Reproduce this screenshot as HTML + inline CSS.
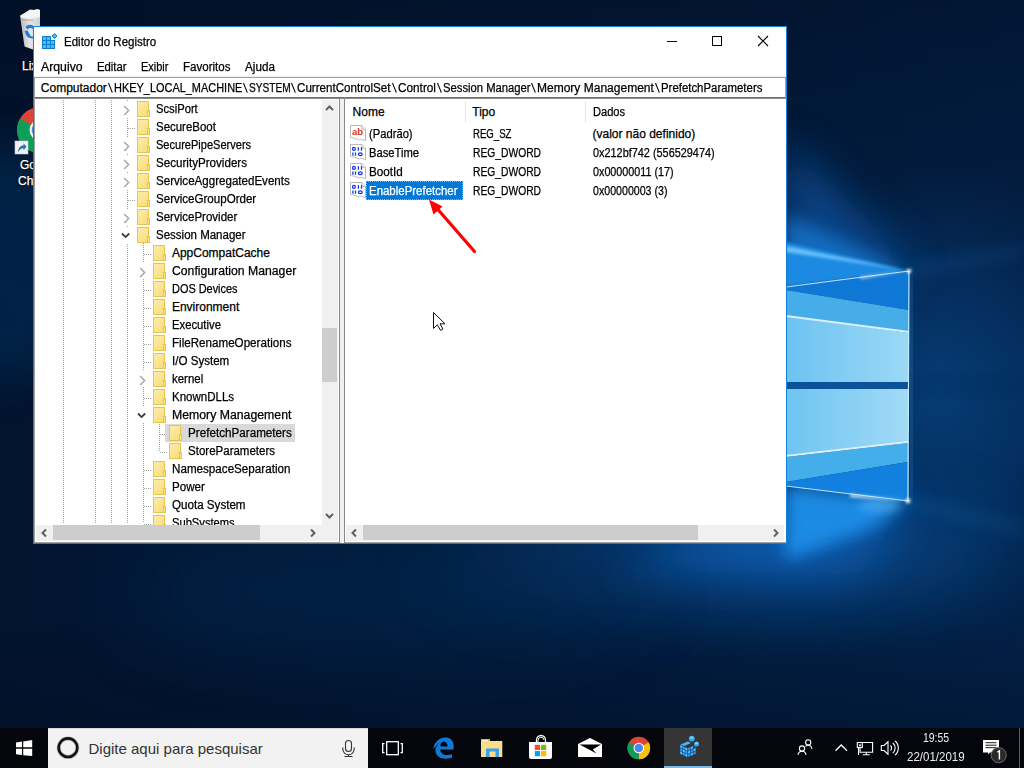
<!DOCTYPE html>
<html><head><meta charset="utf-8"><style>
*{margin:0;padding:0;box-sizing:border-box}
html,body{width:1024px;height:768px;overflow:hidden;background:#031330}
body{position:relative;font-family:"Liberation Sans",sans-serif;font-size:12px;color:#000}
.a{position:absolute}
.t{position:absolute;white-space:nowrap;line-height:14px;transform-origin:0 0;-webkit-text-stroke:0.25px currentColor}
.dv{width:1px;background:repeating-linear-gradient(to bottom,#a0a0a0 0 1px,transparent 1px 2px)}
.dh{height:1px;background:repeating-linear-gradient(to right,#a0a0a0 0 1px,transparent 1px 2px)}
.fold{width:13px;height:16px}
.fold:before{content:"";position:absolute;left:0;top:0;width:12px;height:16px;box-sizing:border-box;border:1px solid #eac444;background:linear-gradient(135deg,#fdeca8,#f9dc7c)}
.fold:after{content:"";position:absolute;left:10px;top:9px;width:3px;height:7px;box-sizing:border-box;border:1px solid #eac444;background:#fbe290}
</style></head><body>
<svg class="a" style="left:0;top:0" width="1024" height="728" viewBox="0 0 1024 728">
<defs>
 <linearGradient id="bg0" x1="0" y1="0" x2="1" y2="0">
  <stop offset="0" stop-color="#021430"/><stop offset="0.5" stop-color="#021a3a"/><stop offset="1" stop-color="#032148"/>
 </linearGradient>
 <radialGradient id="gR" cx="940" cy="390" r="240" gradientTransform="translate(940 390) scale(0.7 0.95) translate(-940 -390)" gradientUnits="userSpaceOnUse">
  <stop offset="0" stop-color="#063c74" stop-opacity="1"/><stop offset="0.55" stop-color="#05356a" stop-opacity="0.7"/><stop offset="1" stop-color="#04305e" stop-opacity="0"/>
 </radialGradient>
 <radialGradient id="gB" cx="790" cy="545" r="230" gradientTransform="translate(790 545) scale(1.3 0.5) translate(-790 -545)" gradientUnits="userSpaceOnUse">
  <stop offset="0" stop-color="#0a5aa8" stop-opacity="0.85"/><stop offset="0.5" stop-color="#053e78" stop-opacity="0.45"/><stop offset="1" stop-color="#04305e" stop-opacity="0"/>
 </radialGradient>
 <linearGradient id="paneT" x1="0" y1="0" x2="1" y2="0">
  <stop offset="0" stop-color="#6cc3f1"/><stop offset="1" stop-color="#9cd8f6"/>
 </linearGradient>
 <linearGradient id="paneB" x1="0" y1="0" x2="1" y2="0">
  <stop offset="0" stop-color="#6ec4f2"/><stop offset="1" stop-color="#a2daf6"/>
 </linearGradient>
 <linearGradient id="beamU" x1="0" y1="1" x2="0" y2="0">
  <stop offset="0" stop-color="#2a9cf0"/><stop offset="1" stop-color="#0a5fb8" stop-opacity="0"/>
 </linearGradient>
 <linearGradient id="topDark" x1="0" y1="0" x2="0" y2="1">
  <stop offset="0" stop-color="#010a1c" stop-opacity="0.45"/><stop offset="0.3" stop-color="#010a1c" stop-opacity="0.15"/><stop offset="0.5" stop-color="#010a1c" stop-opacity="0"/><stop offset="0.85" stop-color="#010a1c" stop-opacity="0"/><stop offset="1" stop-color="#010a1c" stop-opacity="0.35"/>
 </linearGradient>
 <filter id="bl8" x="-50%" y="-50%" width="200%" height="200%"><feGaussianBlur stdDeviation="8"/></filter>
 <filter id="bl5" x="-50%" y="-50%" width="200%" height="200%"><feGaussianBlur stdDeviation="5"/></filter>
 <filter id="bl40" x="-50%" y="-50%" width="200%" height="200%"><feGaussianBlur stdDeviation="40"/></filter>
 <filter id="bl20" x="-50%" y="-50%" width="200%" height="200%"><feGaussianBlur stdDeviation="20"/></filter>
 <filter id="bl2" x="-50%" y="-50%" width="200%" height="200%"><feGaussianBlur stdDeviation="1.5"/></filter>
</defs>
<rect width="1024" height="728" fill="url(#bg0)"/>
<rect width="1024" height="728" fill="url(#gR)"/>
<rect width="1024" height="728" fill="url(#gB)"/>
<rect width="1024" height="728" fill="url(#topDark)"/>
<ellipse cx="10" cy="260" rx="60" ry="120" fill="#05305e" opacity="0.5" filter="url(#bl20)"/>
<!-- upper glow beam -->
<polygon points="915,268 786,140 786,292" fill="#0a56a8" opacity="0.7" filter="url(#bl20)"/>
<polygon points="909,271 786,215 786,287" fill="#1274cc" opacity="0.8" filter="url(#bl8)"/>
<polygon points="909,271 786,242 786,287" fill="#1c8ae2" filter="url(#bl2)"/>
<polygon points="909,271 786,246 786,252" fill="#7ccfff" opacity="0.8" filter="url(#bl2)"/>
<!-- lower glow beam -->
<ellipse cx="720" cy="555" rx="280" ry="55" fill="#0a4f98" opacity="0.32" filter="url(#bl40)"/>
<ellipse cx="380" cy="590" rx="260" ry="60" fill="#04305e" opacity="0.35" filter="url(#bl40)"/>
<polygon points="908,501 786,486 620,570 860,575" fill="#0b5fb8" opacity="0.6" filter="url(#bl20)"/>
<polygon points="908,501 786,486 786,560 875,528" fill="#1c8ee8" opacity="0.95" filter="url(#bl8)"/>
<!-- right side dark gap continuation -->
<rect x="909" y="378" width="115" height="14" fill="#042a58" opacity="0.35" filter="url(#bl8)"/>
<line x1="912" y1="275" x2="911" y2="497" stroke="#2a8ae0" stroke-width="10" opacity="0.45" filter="url(#bl8)"/>
<line x1="909" y1="271" x2="1024" y2="250" stroke="#2a8ae0" stroke-width="6" opacity="0.25" filter="url(#bl8)"/>
<line x1="908" y1="501" x2="1024" y2="530" stroke="#2a8ae0" stroke-width="6" opacity="0.25" filter="url(#bl8)"/>
<!-- panes -->
<polygon points="786,287 909,271 909,310 786,290" fill="#0f78d6"/>
<polygon points="786,290 909,310 909,333 786,316" fill="#46ade9"/>
<polygon points="786,316 909,333 909,382 786,382" fill="url(#paneT)"/>
<polygon points="786,382 909,382 909,389 786,389" fill="#0b5298"/>
<polygon points="786,389 908,389 908,442 786,456" fill="url(#paneB)"/>
<polygon points="786,457 908,443 908,462 786,482" fill="#44aeea"/>
<polygon points="786,482 908,462 908,501 786,486" fill="#1280de"/>
<line x1="786" y1="287" x2="909" y2="271" stroke="#b8e4ff" stroke-width="1.2"/>
<line x1="786" y1="316" x2="909" y2="332" stroke="#d8f2ff" stroke-width="2"/>
<line x1="786" y1="456" x2="908" y2="442" stroke="#d8f2ff" stroke-width="2"/>
<line x1="786" y1="486" x2="908" y2="501" stroke="#b8e4ff" stroke-width="1.2"/>
<line x1="909" y1="271" x2="908" y2="501" stroke="#c8ecff" stroke-width="1.2"/>
<!-- flares -->
<path d="M860 277 L909 270.5 L860 279 Z" fill="#e8f8ff" opacity="0.9" filter="url(#bl2)"/>
<path d="M850 494 L908 501.5 L850 497 Z" fill="#e8f8ff" opacity="0.9" filter="url(#bl2)"/>
<ellipse cx="880" cy="505" rx="22" ry="6" fill="#6cc8ff" opacity="0.5" filter="url(#bl5)"/>
<circle cx="909" cy="271" r="2.2" fill="#fff" filter="url(#bl2)"/>
<circle cx="908" cy="501" r="2.4" fill="#fff" filter="url(#bl2)"/>
</svg>
<svg class="a" style="left:0;top:0" width="40" height="200" viewBox="0 0 40 200">
<defs>
 <linearGradient id="binG" x1="0" y1="0" x2="1" y2="0"><stop offset="0" stop-color="#b8b8b8"/><stop offset="0.5" stop-color="#e6e6e6"/><stop offset="1" stop-color="#cfcfcf"/></linearGradient>
</defs>
<path d="M20 15.5 L30 11 L36 9.5 L40 11 L40 49 L33 49.5 L24.5 46.5 Z" fill="url(#binG)"/>
<path d="M20.5 15.5 L26 12 L30 9.5 L34 10 L38 9 L40 10 L40 17 L33 18.5 L27 19 L21 17.5 Z" fill="#f4f4f4"/>
<path d="M22 19 L33 19.5 L33 21 L22 20.5Z" fill="#9a9a9a" opacity="0.5"/>
<path d="M25.5 27 C27 24.5 31 24 33 25.5 L33 29 C31 27.5 28.5 27.8 27.5 29.5 Z" fill="#1e7fd8"/>
<path d="M24.5 31 L27.5 30.5 L30 35 C30.5 36 31.5 36.5 33 36.5 L33 38.5 C30 38.5 27.5 37.5 26 35 Z" fill="#1e7fd8"/>
<circle cx="40" cy="130" r="23" fill="#db4437"/>
<path d="M40 130 L20.1 118.5 A23 23 0 0 0 40 153 Z" fill="#0f9d58"/>
<path d="M40 130 L40 153 A23 23 0 0 0 52 150 Z" fill="#f4c20d"/>
<circle cx="40" cy="130" r="10.5" fill="#f1f1f1"/>
<circle cx="40" cy="130" r="8.3" fill="#4a85e8"/>
<rect x="15" y="141" width="13" height="13" fill="#f2f2f2" stroke="#c8c8c8" stroke-width="0.6"/>
<path d="M18 152 C18.5 147 21 145.5 23.5 145.5 L23.5 143.3 L26.5 146.8 L23.5 150.3 L23.5 148.2 C21.5 148.2 19.5 149.5 18 152 Z" fill="#2a6fb8"/>
</svg>
<div class="t" style="left:22px;top:58.84px;color:#fff;text-shadow:0 0 2px #000,1px 1px 1px #000;">Lixeira</div><div class="t" style="left:20px;top:157.84px;color:#fff;text-shadow:0 0 2px #000,1px 1px 1px #000;">Google</div><div class="t" style="left:18px;top:173.84px;color:#fff;text-shadow:0 0 2px #000,1px 1px 1px #000;">Chrome</div><div class="a" style="left:33px;top:26px;width:754px;height:518px;background:#1a7fd6;"></div><div class="a" style="left:34px;top:27px;width:752px;height:516px;background:#ffffff;"></div><svg class="a" style="left:40px;top:31px" width="20" height="20" viewBox="0 0 20 20">
<g fill="#48bdf0" stroke="#0e7fcc" stroke-width="1">
<rect x="2.5" y="5.5" width="4" height="4"/><rect x="6.5" y="5.5" width="4" height="4"/>
<rect x="2.5" y="9.5" width="4" height="4"/><rect x="6.5" y="9.5" width="4" height="4"/><rect x="10.5" y="9.5" width="4" height="4"/>
<rect x="2.5" y="13.5" width="4" height="4"/><rect x="6.5" y="13.5" width="4" height="4"/><rect x="10.5" y="13.5" width="4" height="4"/>
<path d="M14.5 2.5 L17 5 L14.5 7.5 L12 5 Z"/>
</g></svg><div class="t" style="left:63.8px;top:34.84px;transform:scaleX(0.96);">Editor do Registro</div><div class="a" style="left:667px;top:41px;width:10px;height:1px;background:#000;"></div><div class="a" style="left:712px;top:36px;width:10px;height:10px;border:1px solid #000"></div><svg class="a" style="left:757px;top:35px" width="12" height="12" viewBox="0 0 12 12"><path d="M1 1L11 11M11 1L1 11" stroke="#000" stroke-width="1.1"/></svg><div class="t" style="left:41.1px;top:59.84px;transform:scaleX(1.022);">Arquivo</div><div class="t" style="left:97px;top:59.84px;transform:scaleX(0.944);">Editar</div><div class="t" style="left:141.1px;top:59.84px;transform:scaleX(0.913);">Exibir</div><div class="t" style="left:183.2px;top:59.84px;transform:scaleX(0.962);">Favoritos</div><div class="t" style="left:245.2px;top:59.84px;transform:scaleX(0.974);">Ajuda</div><div class="a" style="left:34px;top:76px;width:752px;height:1px;background:#f0f0f0;"></div><div class="a" style="left:34px;top:77px;width:752px;height:1px;background:#a0a0a0;"></div><div class="a" style="left:34px;top:97px;width:752px;height:1px;background:#6e6e6e;"></div><div class="a" style="left:34px;top:98px;width:752px;height:1px;background:#8a8a8a;"></div><div class="a" style="left:785px;top:77px;width:1px;height:21px;background:#a0a0a0;"></div><div class="t" style="left:40.8px;top:80.84px;">Computador</div><div class="t" style="left:113.9px;top:80.84px;transform:scaleX(0.912);">HKEY_LOCAL_MACHINE</div><div class="t" style="left:248.6px;top:80.84px;transform:scaleX(0.847);">SYSTEM</div><div class="t" style="left:297px;top:80.84px;transform:scaleX(0.967);">CurrentControlSet</div><div class="t" style="left:397.9px;top:80.84px;transform:scaleX(0.982);">Control</div><div class="t" style="left:442.6px;top:80.84px;transform:scaleX(0.938);">Session Manager</div><div class="t" style="left:536.8px;top:80.84px;transform:scaleX(1.001);">Memory Management</div><div class="t" style="left:660.9px;top:80.84px;transform:scaleX(0.95);">PrefetchParameters</div><svg class="a" style="left:107.9px;top:82px" width="7" height="14" viewBox="0 0 7 14"><path d="M0.45 1 L4.35 10.6" stroke="#000" stroke-width="1.1"/></svg><svg class="a" style="left:243.1px;top:82px" width="7" height="14" viewBox="0 0 7 14"><path d="M0.45 1 L4.35 10.6" stroke="#000" stroke-width="1.1"/></svg><svg class="a" style="left:291.3px;top:82px" width="7" height="14" viewBox="0 0 7 14"><path d="M0.45 1 L4.35 10.6" stroke="#000" stroke-width="1.1"/></svg><svg class="a" style="left:392.1px;top:82px" width="7" height="14" viewBox="0 0 7 14"><path d="M0.45 1 L4.35 10.6" stroke="#000" stroke-width="1.1"/></svg><svg class="a" style="left:436.9px;top:82px" width="7" height="14" viewBox="0 0 7 14"><path d="M0.45 1 L4.35 10.6" stroke="#000" stroke-width="1.1"/></svg><svg class="a" style="left:530.9px;top:82px" width="7" height="14" viewBox="0 0 7 14"><path d="M0.45 1 L4.35 10.6" stroke="#000" stroke-width="1.1"/></svg><svg class="a" style="left:655.0px;top:82px" width="7" height="14" viewBox="0 0 7 14"><path d="M0.45 1 L4.35 10.6" stroke="#000" stroke-width="1.1"/></svg><div class="a" style="left:34px;top:77px;width:1px;height:22px;background:#a0a0a0;"></div><div class="a" style="left:34px;top:99px;width:1px;height:444px;background:#a0a0a0;"></div><div class="a" style="left:34px;top:542px;width:306px;height:1px;background:#a0a0a0;"></div><div class="a" style="left:339px;top:97px;width:1px;height:446px;background:#848a94;"></div><div class="a" style="left:340px;top:99px;width:4px;height:444px;background:#f0f0f0;"></div><div class="a" style="left:344px;top:97px;width:1px;height:446px;background:#848a94;"></div><div class="a" style="left:345px;top:542px;width:441px;height:1px;background:#a0a0a0;"></div><div class="a" style="left:35px;top:99px;width:287px;height:426px;overflow:hidden"><div class="a dv" style="left:28px;top:1px;height:423px"></div><div class="a dv" style="left:60px;top:1px;height:423px"></div><div class="a dv" style="left:76px;top:1px;height:423px"></div><div class="a dv" style="left:92px;top:1px;height:423px"></div><div class="a dv" style="left:108px;top:144px;height:280px"></div><div class="a dv" style="left:124px;top:325px;height:27px"></div><div class="a" style="left:85px;top:2px;width:14px;height:16px;background:#fff"></div><svg class="a" style="left:88px;top:6px" width="8" height="11" viewBox="0 0 8 11"><path d="M1.2 1 L5.6 5.5 L1.2 10" fill="none" stroke="#a6a6a6" stroke-width="1.5"/></svg><div class="a fold" style="left:102px;top:2px"></div><div class="t" style="left:120.9px;top:2.84px;transform:scaleX(0.934);">ScsiPort</div><div class="a dh" style="left:93px;top:29px;width:7px"></div><div class="a fold" style="left:102px;top:20px"></div><div class="t" style="left:120.9px;top:20.84px;transform:scaleX(0.954);">SecureBoot</div><div class="a" style="left:85px;top:38px;width:14px;height:16px;background:#fff"></div><svg class="a" style="left:88px;top:42px" width="8" height="11" viewBox="0 0 8 11"><path d="M1.2 1 L5.6 5.5 L1.2 10" fill="none" stroke="#a6a6a6" stroke-width="1.5"/></svg><div class="a fold" style="left:102px;top:38px"></div><div class="t" style="left:120.9px;top:38.84px;transform:scaleX(0.92);">SecurePipeServers</div><div class="a" style="left:85px;top:56px;width:14px;height:16px;background:#fff"></div><svg class="a" style="left:88px;top:60px" width="8" height="11" viewBox="0 0 8 11"><path d="M1.2 1 L5.6 5.5 L1.2 10" fill="none" stroke="#a6a6a6" stroke-width="1.5"/></svg><div class="a fold" style="left:102px;top:56px"></div><div class="t" style="left:120.9px;top:56.84px;transform:scaleX(0.968);">SecurityProviders</div><div class="a" style="left:85px;top:74px;width:14px;height:16px;background:#fff"></div><svg class="a" style="left:88px;top:78px" width="8" height="11" viewBox="0 0 8 11"><path d="M1.2 1 L5.6 5.5 L1.2 10" fill="none" stroke="#a6a6a6" stroke-width="1.5"/></svg><div class="a fold" style="left:102px;top:74px"></div><div class="t" style="left:120.9px;top:74.84px;transform:scaleX(0.964);">ServiceAggregatedEvents</div><div class="a dh" style="left:93px;top:101px;width:7px"></div><div class="a fold" style="left:102px;top:92px"></div><div class="t" style="left:120.9px;top:92.84px;transform:scaleX(0.963);">ServiceGroupOrder</div><div class="a" style="left:85px;top:110px;width:14px;height:16px;background:#fff"></div><svg class="a" style="left:88px;top:114px" width="8" height="11" viewBox="0 0 8 11"><path d="M1.2 1 L5.6 5.5 L1.2 10" fill="none" stroke="#a6a6a6" stroke-width="1.5"/></svg><div class="a fold" style="left:102px;top:110px"></div><div class="t" style="left:120.9px;top:110.84px;transform:scaleX(0.96);">ServiceProvider</div><div class="a" style="left:85px;top:128px;width:14px;height:16px;background:#fff"></div><svg class="a" style="left:86px;top:133px" width="11" height="8" viewBox="0 0 11 8"><path d="M1 1.5 L4.6 5.1 L8.2 1.5" fill="none" stroke="#3c3c3c" stroke-width="1.8"/></svg><div class="a fold" style="left:102px;top:128px"></div><div class="t" style="left:120.9px;top:128.84px;transform:scaleX(0.959);">Session Manager</div><div class="a dh" style="left:109px;top:155px;width:7px"></div><div class="a fold" style="left:118px;top:146px"></div><div class="t" style="left:136.9px;top:146.84px;">AppCompatCache</div><div class="a" style="left:101px;top:164px;width:14px;height:16px;background:#fff"></div><svg class="a" style="left:104px;top:168px" width="8" height="11" viewBox="0 0 8 11"><path d="M1.2 1 L5.6 5.5 L1.2 10" fill="none" stroke="#a6a6a6" stroke-width="1.5"/></svg><div class="a fold" style="left:118px;top:164px"></div><div class="t" style="left:136.9px;top:164.84px;transform:scaleX(1.018);">Configuration Manager</div><div class="a dh" style="left:109px;top:191px;width:7px"></div><div class="a fold" style="left:118px;top:182px"></div><div class="t" style="left:136.9px;top:182.84px;transform:scaleX(0.91);">DOS Devices</div><div class="a dh" style="left:109px;top:209px;width:7px"></div><div class="a fold" style="left:118px;top:200px"></div><div class="t" style="left:136.9px;top:200.84px;">Environment</div><div class="a dh" style="left:109px;top:227px;width:7px"></div><div class="a fold" style="left:118px;top:218px"></div><div class="t" style="left:136.9px;top:218.84px;transform:scaleX(0.9400000000000001);">Executive</div><div class="a dh" style="left:109px;top:245px;width:7px"></div><div class="a fold" style="left:118px;top:236px"></div><div class="t" style="left:136.9px;top:236.84px;transform:scaleX(0.968);">FileRenameOperations</div><div class="a dh" style="left:109px;top:263px;width:7px"></div><div class="a fold" style="left:118px;top:254px"></div><div class="t" style="left:136.9px;top:254.84px;transform:scaleX(0.965);">I/O System</div><div class="a" style="left:101px;top:272px;width:14px;height:16px;background:#fff"></div><svg class="a" style="left:104px;top:276px" width="8" height="11" viewBox="0 0 8 11"><path d="M1.2 1 L5.6 5.5 L1.2 10" fill="none" stroke="#a6a6a6" stroke-width="1.5"/></svg><div class="a fold" style="left:118px;top:272px"></div><div class="t" style="left:136.9px;top:272.84px;transform:scaleX(0.955);">kernel</div><div class="a dh" style="left:109px;top:299px;width:7px"></div><div class="a fold" style="left:118px;top:290px"></div><div class="t" style="left:136.9px;top:290.84px;transform:scaleX(0.959);">KnownDLLs</div><div class="a" style="left:101px;top:308px;width:14px;height:16px;background:#fff"></div><svg class="a" style="left:102px;top:313px" width="11" height="8" viewBox="0 0 11 8"><path d="M1 1.5 L4.6 5.1 L8.2 1.5" fill="none" stroke="#3c3c3c" stroke-width="1.8"/></svg><div class="a fold" style="left:118px;top:308px"></div><div class="t" style="left:136.9px;top:308.84px;transform:scaleX(1.023);">Memory Management</div><div class="a dh" style="left:125px;top:335px;width:7px"></div><div class="a" style="left:130px;top:325px;width:130px;height:18px;background:#d9d9d9"></div><div class="a fold" style="left:134px;top:326px"></div><div class="t" style="left:152.9px;top:326.84px;transform:scaleX(0.973);">PrefetchParameters</div><div class="a dh" style="left:125px;top:353px;width:7px"></div><div class="a fold" style="left:134px;top:344px"></div><div class="t" style="left:152.9px;top:344.84px;transform:scaleX(0.96);">StoreParameters</div><div class="a dh" style="left:109px;top:371px;width:7px"></div><div class="a fold" style="left:118px;top:362px"></div><div class="t" style="left:136.9px;top:362.84px;transform:scaleX(0.97);">NamespaceSeparation</div><div class="a dh" style="left:109px;top:389px;width:7px"></div><div class="a fold" style="left:118px;top:380px"></div><div class="t" style="left:136.9px;top:380.84px;transform:scaleX(0.965);">Power</div><div class="a dh" style="left:109px;top:407px;width:7px"></div><div class="a fold" style="left:118px;top:398px"></div><div class="t" style="left:136.9px;top:398.84px;transform:scaleX(0.967);">Quota System</div><div class="a dh" style="left:109px;top:425px;width:7px"></div><div class="a fold" style="left:118px;top:416px"></div><div class="t" style="left:136.9px;top:416.84px;transform:scaleX(0.93);">SubSystems</div></div><div class="a" style="left:322px;top:100px;width:16px;height:425px;background:#f0f0f0;"></div><div class="a" style="left:322px;top:328px;width:15px;height:54px;background:#cdcdcd;"></div><svg class="a" style="left:322px;top:100px" width="16" height="16" viewBox="0 0 16 16"><path d="M4 10 L7.5 6.5 L11 10" fill="none" stroke="#606060" stroke-width="2"/></svg><svg class="a" style="left:322px;top:508px" width="16" height="16" viewBox="0 0 16 16"><path d="M4 6 L7.5 9.5 L11 6" fill="none" stroke="#606060" stroke-width="2"/></svg><div class="a" style="left:36px;top:525px;width:302px;height:16px;background:#f0f0f0;"></div><div class="a" style="left:53px;top:525px;width:207px;height:15px;background:#cdcdcd;"></div><svg class="a" style="left:36px;top:525px" width="16" height="16" viewBox="0 0 16 16"><path d="M10 4.5 L6.5 8 L10 11.5" fill="none" stroke="#606060" stroke-width="2"/></svg><svg class="a" style="left:305px;top:525px" width="16" height="16" viewBox="0 0 16 16"><path d="M6 4.5 L9.5 8 L6 11.5" fill="none" stroke="#606060" stroke-width="2"/></svg><div class="a" style="left:465px;top:101px;width:1px;height:22px;background:#e5e5e5;"></div><div class="a" style="left:585px;top:101px;width:1px;height:22px;background:#e5e5e5;"></div><div class="t" style="left:352.6px;top:104.84px;">Nome</div><div class="t" style="left:472.3px;top:104.84px;">Tipo</div><div class="t" style="left:592.5px;top:104.84px;transform:scaleX(0.925);">Dados</div><svg class="a" style="left:350px;top:125px" width="16" height="16" viewBox="0 0 16 16"><path d="M0.5 0.5 H11.8 L15.5 4.2 V15.6 C14 15.6 13.5 14.8 12.5 14.5 C11 14 10 15 8.5 14.8 C7 14.6 6 13.4 4.5 13.3 C3 13.2 2.5 12.5 0.5 12.5 Z" fill="#fff" stroke="#b0b0b0" stroke-width="0.9"/><path d="M11.8 0.5 V4.2 H15.5" fill="#f4f4f4" stroke="#b0b0b0" stroke-width="0.9"/><text x="1.9" y="10.2" font-family="Liberation Sans" font-weight="bold" font-size="9.4" fill="#d8391f" textLength="11.2" lengthAdjust="spacingAndGlyphs">ab</text></svg><div class="t" style="left:369px;top:126.84px;transform:scaleX(0.934);">(Padrão)</div><div class="t" style="left:472.5px;top:126.84px;transform:scaleX(0.8);">REG_SZ</div><div class="t" style="left:592.5px;top:126.84px;">(valor não definido)</div><svg class="a" style="left:350px;top:144px" width="16" height="16" viewBox="0 0 16 16"><path d="M0.5 0.5 H11.8 L15.5 4.2 V15.6 C14 15.6 13.5 14.8 12.5 14.5 C11 14 10 15 8.5 14.8 C7 14.6 6 13.4 4.5 13.3 C3 13.2 2.5 12.5 0.5 12.5 Z" fill="#fff" stroke="#b0b0b0" stroke-width="0.9"/><path d="M11.8 0.5 V4.2 H15.5" fill="#f4f4f4" stroke="#b0b0b0" stroke-width="0.9"/><g fill="none" stroke="#1236e0" stroke-width="1.25"><ellipse cx="3.9" cy="4.9" rx="1.45" ry="1.45"/><path d="M8.4 3.2 V6.7 M11.5 3.2 V6.7 M2.9 8.5 V11.8 M5.5 8.5 V11.8"/><ellipse cx="10.3" cy="10.2" rx="1.9" ry="1.35"/></g></svg><div class="t" style="left:369px;top:145.84px;transform:scaleX(0.935);">BaseTime</div><div class="t" style="left:472.5px;top:145.84px;transform:scaleX(0.857);">REG_DWORD</div><div class="t" style="left:592.5px;top:145.84px;transform:scaleX(0.907);">0x212bf742 (556529474)</div><svg class="a" style="left:350px;top:163px" width="16" height="16" viewBox="0 0 16 16"><path d="M0.5 0.5 H11.8 L15.5 4.2 V15.6 C14 15.6 13.5 14.8 12.5 14.5 C11 14 10 15 8.5 14.8 C7 14.6 6 13.4 4.5 13.3 C3 13.2 2.5 12.5 0.5 12.5 Z" fill="#fff" stroke="#b0b0b0" stroke-width="0.9"/><path d="M11.8 0.5 V4.2 H15.5" fill="#f4f4f4" stroke="#b0b0b0" stroke-width="0.9"/><g fill="none" stroke="#1236e0" stroke-width="1.25"><ellipse cx="3.9" cy="4.9" rx="1.45" ry="1.45"/><path d="M8.4 3.2 V6.7 M11.5 3.2 V6.7 M2.9 8.5 V11.8 M5.5 8.5 V11.8"/><ellipse cx="10.3" cy="10.2" rx="1.9" ry="1.35"/></g></svg><div class="t" style="left:369px;top:164.84px;transform:scaleX(0.974);">BootId</div><div class="t" style="left:472.5px;top:164.84px;transform:scaleX(0.857);">REG_DWORD</div><div class="t" style="left:592.5px;top:164.84px;transform:scaleX(0.898);">0x00000011 (17)</div><svg class="a" style="left:350px;top:182px" width="16" height="16" viewBox="0 0 16 16"><path d="M0.5 0.5 H11.8 L15.5 4.2 V15.6 C14 15.6 13.5 14.8 12.5 14.5 C11 14 10 15 8.5 14.8 C7 14.6 6 13.4 4.5 13.3 C3 13.2 2.5 12.5 0.5 12.5 Z" fill="#fff" stroke="#b0b0b0" stroke-width="0.9"/><path d="M11.8 0.5 V4.2 H15.5" fill="#f4f4f4" stroke="#b0b0b0" stroke-width="0.9"/><g fill="none" stroke="#1236e0" stroke-width="1.25"><ellipse cx="3.9" cy="4.9" rx="1.45" ry="1.45"/><path d="M8.4 3.2 V6.7 M11.5 3.2 V6.7 M2.9 8.5 V11.8 M5.5 8.5 V11.8"/><ellipse cx="10.3" cy="10.2" rx="1.9" ry="1.35"/></g></svg><div class="a" style="left:366px;top:181px;width:97px;height:19px;background:#0078d7;outline:1px dotted #ff9b21;outline-offset:-1px"></div><div class="t" style="left:369px;top:183.84px;color:#fff;transform:scaleX(0.954);">EnablePrefetcher</div><div class="t" style="left:472.5px;top:183.84px;transform:scaleX(0.857);">REG_DWORD</div><div class="t" style="left:592.5px;top:183.84px;transform:scaleX(0.886);">0x00000003 (3)</div><div class="a" style="left:346px;top:525px;width:438px;height:16px;background:#f0f0f0;"></div><div class="a" style="left:363px;top:525px;width:335px;height:15px;background:#cdcdcd;"></div><svg class="a" style="left:346px;top:525px" width="16" height="16" viewBox="0 0 16 16"><path d="M10 4.5 L6.5 8 L10 11.5" fill="none" stroke="#606060" stroke-width="2"/></svg><svg class="a" style="left:768px;top:525px" width="16" height="16" viewBox="0 0 16 16"><path d="M6 4.5 L9.5 8 L6 11.5" fill="none" stroke="#606060" stroke-width="2"/></svg><svg class="a" style="left:0;top:0" width="1024" height="768" viewBox="0 0 1024 768">
<line x1="474.5" y1="251.5" x2="434" y2="205" stroke="#ff0000" stroke-width="3.2" stroke-linecap="round"/>
<path d="M429 199.5 L442.5 206.5 L433.5 214.5 Z" fill="#ff0000"/>
<path d="M433.5 312.5 L433.5 328.5 L437.3 324.8 L440.6 330.4 L443 329 L440 323.8 L445 323.8 Z" fill="#fff" stroke="#111" stroke-width="1" stroke-linejoin="round"/>
</svg><div class="a" style="left:0;top:728px;width:1024px;height:40px;background:#04060b"></div>
<div class="a" style="left:48px;top:728px;width:320px;height:40px;background:#f2f2f2;border-top:1px solid #d6d6d6"></div>
<div class="a" style="left:664px;top:728px;width:48px;height:40px;background:#353535"></div>
<div class="a" style="left:664px;top:766px;width:48px;height:2px;background:#76b9ed"></div>
<div class="a" style="left:1019px;top:728px;width:1px;height:40px;background:#5a5a5a"></div>
<div class="t" style="left:88.5px;top:740px;font-size:15px;line-height:18px;color:#333;-webkit-text-stroke:0">Digite aqui para pesquisar</div>
<div class="t" style="left:923px;top:731.4px;color:#fff;transform:scaleX(0.87);-webkit-text-stroke:0;color:#eee">19:55</div>
<div class="t" style="left:907.3px;top:749.6px;color:#fff;transform:scaleX(0.96);-webkit-text-stroke:0;color:#eee">22/01/2019</div>
<svg class="a" style="left:0;top:728px" width="1024" height="40" viewBox="0 728 1024 40">
 <!-- start -->
 <g fill="#fff">
  <polygon points="16,742.5 22,741.6 22,747.2 16,747.2"/>
  <polygon points="23.2,741.5 32.2,740.1 32.2,747.2 23.2,747.2"/>
  <polygon points="16,748.8 22,748.8 22,755 16,754.2"/>
  <polygon points="23.2,748.8 32.2,748.8 32.2,756 23.2,755.2"/>
 </g>
 <!-- cortana -->
 <circle cx="68" cy="747.7" r="9.3" fill="none" stroke="#1a1a1a" stroke-width="2.6"/>
 <circle cx="68" cy="747.7" r="9.3" fill="none" stroke="#000" stroke-opacity="0.25" stroke-width="4"/>
 <!-- mic -->
 <g fill="none" stroke="#333" stroke-width="1.1">
  <rect x="345.5" y="740.5" width="6" height="11" rx="3"/>
  <path d="M342.8 747.5 V749 A5.7 5.7 0 0 0 354.2 749 V747.5"/>
  <path d="M348.5 754.8 V756.5 M344.5 756.5 H352.5"/>
 </g>
 <!-- task view -->
 <g fill="none" stroke="#fff" stroke-width="1.3">
  <rect x="386.7" y="741.7" width="11.6" height="13"/>
  <path d="M384.5 743.7 H382.7 V752.7 H384.5"/>
  <path d="M400.5 743.7 H402.3 V752.7 H400.5"/>
 </g>
 <!-- edge -->
 <path d="M433.2 749.5 C434 741 441 736.5 447 737.6 C452 738.5 454.5 743 453.5 749.5 H440.2 C440.5 754 445 756.5 452 754.3 V757.8 C441 761 434.5 756.2 435.5 748 C436.5 745 438 743.5 440 742.3 C438 743.8 437 746 436.7 747.5 C436 746 434.3 746.6 433.2 749.5 Z M440.3 746.5 H447.6 C447.5 743 445.3 741.5 443.8 741.5 C442 741.5 440.5 743.3 440.3 746.5 Z" fill="#0e7ad8" fill-rule="evenodd"/>
 <!-- explorer -->
 <rect x="481" y="739" width="9" height="3" fill="#e6b43c"/>
 <rect x="481" y="741" width="21.3" height="16" fill="#f8dd8c"/>
 <rect x="482" y="740" width="6" height="1" fill="#fff3c8"/>
 <path d="M486 757 V748.5 H499 V757 H495.5 V751.5 H489.5 V757 Z" fill="#3aa2ea"/>
 <!-- store -->
 <path d="M536.5 742.5 V740 A4.5 4.5 0 0 1 545.5 740 V742.5" fill="none" stroke="#fff" stroke-width="1.3"/>
 <path d="M538 742.5 V740.5 A3 3 0 0 1 544 740" fill="none" stroke="#fff" stroke-width="1"/>
 <path d="M529 742 H552 V757 Q552 759 550 759 H531 Q529 759 529 757 Z" fill="#fff"/>
 <rect x="534.8" y="744.8" width="5.2" height="5.2" fill="#f25022"/>
 <rect x="541" y="744.8" width="5.2" height="5.2" fill="#7fba00"/>
 <rect x="534.8" y="751" width="5.2" height="5.2" fill="#00a4ef"/>
 <rect x="541" y="751" width="5.2" height="5.2" fill="#ffb900"/>
 <!-- mail -->
 <path d="M578 744 L590 738 L602 744 V757 H578 Z" fill="#fff"/>
 <path d="M579.5 744.5 L601 744.5 L592.8 749.4 L596.5 753.4 Z" fill="#000"/>
 <!-- chrome -->
 <circle cx="638.8" cy="748" r="11.3" fill="#db4437"/>
 <path d="M638.8 748 L648.6 742.35 A11.3 11.3 0 0 1 638.8 759.3 Z" fill="#f4c20d"/>
 <path d="M638.8 748 L638.8 759.3 A11.3 11.3 0 0 1 629 742.35 Z" fill="#0f9d58"/>
 <circle cx="638.8" cy="748" r="5.3" fill="#fff"/>
 <circle cx="638.8" cy="748" r="4.3" fill="#4f86ec"/>
 <!-- regedit -->
 <polygon points="680,744.5 687.5,748 696,744.5 696,754 687.5,757.5 680,754" fill="#0c4f92"/>
 <polygon points="680,744.5 688,741 691.5,742.6 684,746.2" fill="#0c4f92"/>
 <polygon points="680.30,745.02 682.20,745.91 682.20,748.31 680.30,747.43" fill="#62c9f8"/>
 <polygon points="680.30,748.19 682.20,749.07 682.20,751.48 680.30,750.59" fill="#3aa6ea"/>
 <polygon points="680.30,751.35 682.20,752.24 682.20,754.65 680.30,753.76" fill="#62c9f8"/>
 <polygon points="682.80,746.19 684.70,747.07 684.70,749.48 682.80,748.59" fill="#3aa6ea"/>
 <polygon points="682.80,749.35 684.70,750.24 684.70,752.65 682.80,751.76" fill="#62c9f8"/>
 <polygon points="682.80,752.52 684.70,753.41 684.70,755.81 682.80,754.93" fill="#3aa6ea"/>
 <polygon points="685.30,747.35 687.20,748.24 687.20,750.65 685.30,749.76" fill="#62c9f8"/>
 <polygon points="685.30,750.52 687.20,751.41 687.20,753.81 685.30,752.93" fill="#3aa6ea"/>
 <polygon points="685.30,753.69 687.20,754.57 687.20,756.98 685.30,756.09" fill="#62c9f8"/>
 <polygon points="687.84,748.24 689.99,747.35 689.99,749.76 687.84,750.65" fill="#2f93dc"/>
 <polygon points="687.84,751.41 689.99,750.52 689.99,752.93 687.84,753.81" fill="#56bdf2"/>
 <polygon points="687.84,754.57 689.99,753.69 689.99,756.09 687.84,756.98" fill="#2f93dc"/>
 <polygon points="690.67,747.07 692.83,746.19 692.83,748.59 690.67,749.48" fill="#56bdf2"/>
 <polygon points="690.67,750.24 692.83,749.35 692.83,751.76 690.67,752.65" fill="#2f93dc"/>
 <polygon points="690.67,753.41 692.83,752.52 692.83,754.93 690.67,755.81" fill="#56bdf2"/>
 <polygon points="693.51,749.07 695.66,748.19 695.66,750.59 693.51,751.48" fill="#56bdf2"/>
 <polygon points="693.51,752.24 695.66,751.35 695.66,753.76 693.51,754.65" fill="#2f93dc"/>
 <polygon points="680.8,744.4 687.8,741.5 691,742.9 684,745.9" fill="#4fb6ef"/>
 <circle cx="691.8" cy="738.6" r="2.9" fill="#3eaaee"/><path d="M689.5 738.6 L691.8 736 L694 738.6Z" fill="#7ad4fb"/>
 <circle cx="696.5" cy="744" r="2.5" fill="#3eaaee"/><path d="M694.5 744 L696.5 741.8 L698.5 744Z" fill="#7ad4fb"/>
 <!-- people -->
 <g fill="none" stroke="#fff" stroke-width="1.1">
  <circle cx="802" cy="748.5" r="2.6"/>
  <path d="M798 755 C798.5 752 800 751.3 802 751.3 C804 751.3 805.5 752 806 755"/>
  <circle cx="808.2" cy="742.4" r="2.6"/>
  <path d="M805.5 746.5 C806 745.5 807 745.2 808.2 745.2 C810 745.2 811.5 746 812 749"/>
 </g>
 <!-- chevron up -->
 <path d="M835.5 750.8 L841.2 745 L847 750.8" fill="none" stroke="#fff" stroke-width="1.3"/>
 <!-- network -->
 <g fill="none" stroke="#fff" stroke-width="1.1">
  <rect x="857.3" y="742.5" width="5" height="5"/>
  <path d="M862.3 742.5 H872.6 V752.2 H860 V747.5"/>
  <path d="M866.3 752.2 V754.8 M862.7 754.8 H869.8"/>
  <path d="M859 744.5 L860 745.8 L861 744.5"/>
 </g>
 <path d="M858.5 747.5 V755" stroke="#fff" stroke-width="1.1"/>
 <!-- volume -->
 <g fill="none" stroke="#fff" stroke-width="1.1">
  <path d="M881.3 745.5 H884 L888 741.8 V754.2 L884 750.5 H881.3 Z"/>
  <path d="M890.5 745.5 A3.5 3.5 0 0 1 890.5 750.5"/>
  <path d="M892.8 743 A6.5 6.5 0 0 1 892.8 753"/>
  <path d="M895 741 A9 9 0 0 1 895 755"/>
 </g>
 <!-- notification -->
 <path d="M983 740 H999 V752.5 H990 L988 754.5 V752.5 H983 Z" fill="#fff"/>
 <path d="M985.5 742.7 H996.5 M985.5 745.2 H996.5 M985.5 747.7 H996.5" stroke="#1a1a1a" stroke-width="1"/>
 <circle cx="998.7" cy="755.2" r="7.6" fill="#2a2a2a" stroke="#6a6a6a" stroke-width="1"/>
 <path d="M997.3 752.3 L999.4 750.8 V759.5" fill="none" stroke="#fff" stroke-width="1.4"/>
</svg>

</body></html>
